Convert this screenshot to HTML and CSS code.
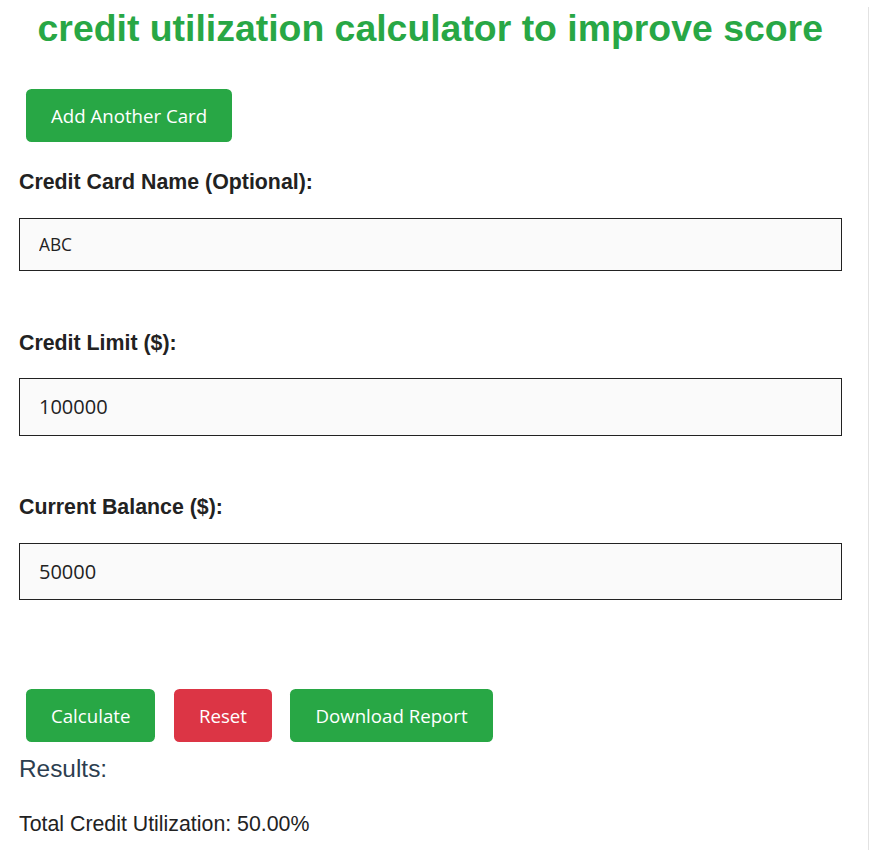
FILE: index.html
```html
<!DOCTYPE html>
<html lang="en">
<head>
<meta charset="utf-8">
<title>Credit Utilization Calculator</title>
<link rel="stylesheet" href="styles.css">
</head>
<body>
<div class="page">
  <h1 class="title">credit utilization calculator to improve score</h1>
  <div class="add-row">
    <button class="btn btn-green" type="button">Add Another Card</button>
  </div>
  <div class="card">
    <label class="field-label label-first">Credit Card Name (Optional):</label>
    <input class="field field-text" type="text" value="ABC">
    <label class="field-label">Credit Limit ($):</label>
    <input class="field field-num" type="text" value="100000">
    <label class="field-label">Current Balance ($):</label>
    <input class="field field-num" type="text" value="50000">
  </div>
  <div class="btn-row">
    <button class="btn btn-green" type="button">Calculate</button>
    <button class="btn btn-red" type="button">Reset</button>
    <button class="btn btn-green" type="button">Download Report</button>
  </div>
  <h2 class="results-title">Results:</h2>
  <p class="results-line">Total Credit Utilization: 50.00%</p>
</div>
</body>
</html>
```
FILE: styles.css
```css
html, body {
  margin: 0;
  padding: 0;
  background: #ffffff;
}

.page {
  box-sizing: border-box;
  width: 868.5px;
  min-height: 850px;
  padding: 0 26px 0 19px;
  border-right: 1.5px solid #e2e2e2;
  font-family: "Liberation Sans", Arial, sans-serif;
  color: #222222;
}

.title {
  margin: 6.6px 0 0 0;
  font-family: "Liberation Sans", Arial, sans-serif;
  font-weight: bold;
  font-size: 37.4px;
  line-height: normal;
  color: #28a745;
  text-align: center;
  white-space: nowrap;
}

.add-row {
  display: flex;
  margin-top: 39.5px;
  padding-left: 7px;
}

.btn {
  box-sizing: border-box;
  height: 53px;
  padding: 0 25px;
  border: none;
  border-radius: 5.5px;
  font-family: "Open Sans", sans-serif;
  font-size: 18.67px;
  color: #ffffff;
  display: inline-flex;
  align-items: center;
  justify-content: center;
}

.btn-green {
  background: #28a745;
}

.btn-red {
  background: #dc3545;
}

.card {
  display: flex;
  flex-direction: column;
}

.field-label {
  display: block;
  font-weight: bold;
  font-size: 21.33px;
  line-height: normal;
  color: #222222;
  margin-top: 59.4px;
}

.label-first {
  margin-top: 28px;
}

.field {
  box-sizing: border-box;
  width: 100%;
  margin-top: 22.5px;
  padding: 14.3px 19px;
  border: 1.4px solid #222222;
  background: #fafafa;
  font-family: "Open Sans", sans-serif;
  color: #222222;
  line-height: normal;
  outline: none;
}

.field-text {
  font-size: 17.3px;
}

.field-num {
  font-size: 20px;
}

.btn-row {
  display: flex;
  gap: 18.5px;
  margin-top: 89px;
  padding-left: 7px;
}

.results-title {
  margin: 13px 0 0 0;
  font-weight: normal;
  font-size: 24.4px;
  line-height: normal;
  color: #2c3e50;
}

.results-line {
  margin: 28.5px 0 0 0;
  font-size: 21.33px;
  line-height: normal;
  color: #222222;
}
```
